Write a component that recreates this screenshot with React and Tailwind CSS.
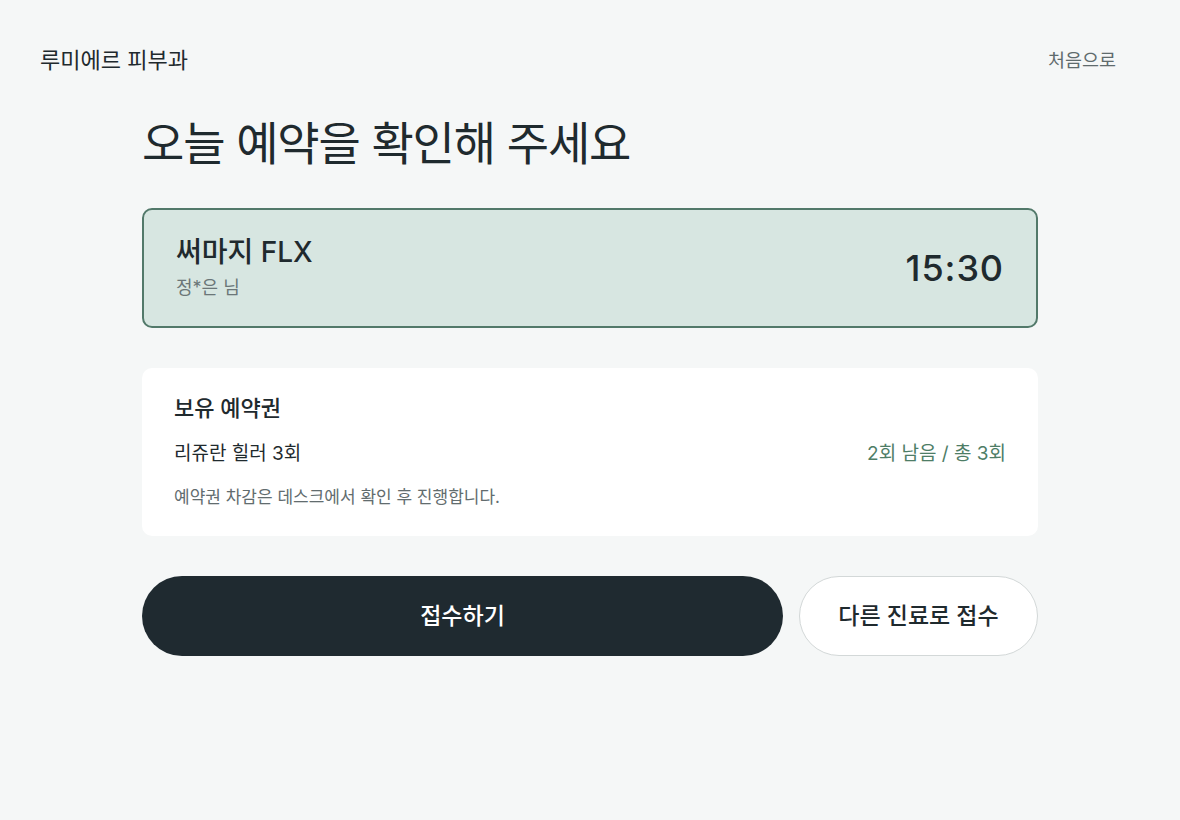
import React from 'react';

const font = { fontFamily: "Inter, 'Noto Sans CJK KR', sans-serif" };

const App = () => (
    <div className="min-h-screen bg-[#f5f7f7] text-[#1f2a2e]" style={font}>
        <header className="flex items-center justify-between pl-10 pr-16 pt-[46px]">
            <span className="text-[22px] leading-7 text-[#1f2a2e]">루미에르 피부과</span>
            <button className="text-[18.5px] leading-7 text-[#5f6b6d]">처음으로</button>
        </header>

        <main className="mx-auto w-[896px] pt-[37px]">
            <h1 className="text-[46px] leading-[64px] font-normal tracking-tight text-[#1f2a2e]">오늘 예약을 확인해 주세요</h1>

            <div className="mt-[33px] h-[120px] flex items-center justify-between px-8 bg-[#d7e6e1] border-2 border-[#52796a] rounded-[10px]">
                <div>
                    <p className="text-[28px] leading-9 font-medium text-[#1f2a2e]">써마지 FLX</p>
                    <p className="mt-1 text-[18px] leading-7 text-[#6b7678]">정*은 님</p>
                </div>
                <span className="text-[36px] leading-10 font-medium tracking-wide text-[#1f2a2e]">15:30</span>
            </div>

            <section className="mt-10 bg-white rounded-[10px] px-8 pt-[26px] pb-[27px]">
                <h2 className="text-[22px] leading-7 font-medium text-[#1f2a2e]">보유 예약권</h2>
                <div className="mt-[18px] flex items-center justify-between">
                    <span className="text-[19px] leading-7 text-[#1f2a2e]">리쥬란 힐러 3회</span>
                    <span className="text-[19px] leading-7 text-[#4e7d66]">2회 남음 / 총 3회</span>
                </div>
                <p className="mt-[17px] text-[17px] leading-6 text-[#626c6e]">예약권 차감은 데스크에서 확인 후 진행합니다.</p>
            </section>

            <div className="mt-10 flex gap-4">
                <button className="flex-1 h-20 rounded-full bg-[#1f2a30] text-white text-[23px] font-medium">접수하기</button>
                <button className="w-[239px] h-20 rounded-full bg-white border border-[#d3d8d8] text-[23px] font-medium text-[#1f2a2e]">다른 진료로 접수</button>
            </div>
        </main>
    </div>
);

export default App;
